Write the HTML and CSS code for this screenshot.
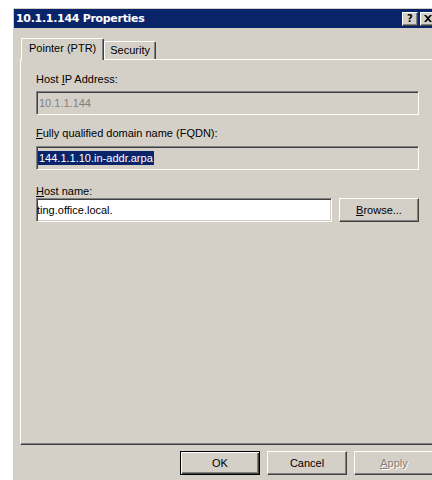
FILE: index.html
```html
<!DOCTYPE html>
<html>
<head>
<meta charset="utf-8">
<title>10.1.1.144 Properties</title>
<link rel="stylesheet" href="styles.css">
</head>
<body>
<div class="window">
  <div class="titlebar">
    <span class="title">10.1.1.144 Properties</span>
    <div class="caption-btns">
      <span class="cbtn help">?</span>
      <span class="cbtn close">
        <svg width="8" height="7" viewBox="0 0 8 7"><path d="M0 0h2l2 2 2-2h2L5 3.5 8 7H6L4 5 2 7H0l3-3.5z" fill="#000"/></svg>
      </span>
    </div>
  </div>
  <div class="content">
    <div class="tabs">
      <div class="tab active">Pointer (PTR)</div>
      <div class="tab">Security</div>
    </div>
    <div class="panel">
      <div class="lbl lbl-ip">Host <u>I</u>P Address:</div>
      <div class="field disabled"><span class="val">10.1.1.144</span></div>

      <div class="lbl lbl-fqdn"><u>F</u>ully qualified domain name (FQDN):</div>
      <div class="field readonly"><span class="val sel">144.1.1.10.in-addr.arpa</span></div>

      <div class="lbl lbl-host"><u>H</u>ost name:</div>
      <div class="row">
        <div class="field edit"><span class="val">ting.office.local.</span></div>
        <button class="btn browse"><u>B</u>rowse...</button>
      </div>
    </div>
    <div class="actions">
      <button class="btn default">OK</button>
      <button class="btn">Cancel</button>
      <button class="btn disabled"><u>A</u>pply</button>
    </div>
  </div>
</div>
</body>
</html>
```

FILE: styles.css
```css
* { box-sizing: border-box; }

html, body {
  margin: 0;
  padding: 0;
}

body {
  width: 432px;
  height: 480px;
  overflow: hidden;
  background: #ffffff;
  font-family: "Liberation Sans", Arial, sans-serif;
  font-size: 11px;
  color: #000;
}

/* dialog frame */
.window {
  margin: 8px 0 0 13px;
  width: 429px;
  height: 490px;
  background: #d4d0c8;
  border-top: 1px solid #d4d0c8;
  border-left: 1px solid #d4d0c8;
}

.titlebar {
  height: 19px;
  background: #0a246a;
  display: flex;
  align-items: center;
  padding: 0 6px 0 2px;
}

.title {
  color: #fff;
  font-family: "DejaVu Sans", sans-serif;
  font-weight: bold;
  font-size: 11px;
  letter-spacing: -0.3px;
  line-height: 13px;
}

.caption-btns {
  margin-left: auto;
  display: flex;
  gap: 2px;
}

.cbtn {
  width: 16px;
  height: 14px;
  background: #d4d0c8;
  border-top: 1px solid #fff;
  border-left: 1px solid #fff;
  border-right: 1px solid #404040;
  border-bottom: 1px solid #404040;
  box-shadow: inset -1px -1px #808080;
  display: flex;
  align-items: center;
  justify-content: center;
}

.cbtn.help {
  font-family: "DejaVu Sans", sans-serif;
  font-weight: bold;
  font-size: 10px;
  line-height: 12px;
}

.content {
  padding: 10px 6px 0 6px;
}

/* property sheet tabs */
.tabs {
  display: flex;
  align-items: flex-end;
  height: 22px;
  margin: 0 0 -1px 1px;
  position: relative;
  z-index: 1;
}

.tab {
  height: 18px;
  margin-bottom: 1px;
  padding: 0 5px 0 5px;
  background: #d4d0c8;
  border-top: 1px solid #fff;
  border-left: 1px solid #fff;
  border-right: 1px solid #404040;
  border-top-left-radius: 2px;
  border-top-right-radius: 2px;
  box-shadow: inset -1px 0 #808080;
  display: flex;
  align-items: center;
  line-height: 13px;
}

.tab.active {
  height: 22px;
  margin-bottom: 0;
  padding: 0 7px 2px 7px;
}

.panel {
  height: 386px;
  background: #d4d0c8;
  border-top: 1px solid #fff;
  border-left: 1px solid #fff;
  border-right: 1px solid #404040;
  border-bottom: 1px solid #404040;
  box-shadow: inset -1px -1px #808080;
  padding: 13px 16px 0 15px;
}

.lbl {
  line-height: 13px;
}

.lbl-ip { margin: 0 0 5px; }
.lbl-fqdn { margin: 12px 0 6px; }
.lbl-host { margin: 15px 0 0; }

/* sunken edit boxes */
.field {
  height: 24px;
  border-top: 1px solid #808080;
  border-left: 1px solid #808080;
  border-right: 1px solid #fff;
  border-bottom: 1px solid #fff;
  box-shadow: inset 1px 1px #404040, inset -1px -1px #d4d0c8;
  padding: 0 1px;
  display: flex;
  align-items: center;
  white-space: nowrap;
  overflow: hidden;
}

.field.disabled { color: #808080; }

.val {
  line-height: 14px;
  padding-left: 1px;
}

.val.sel {
  background: #0a246a;
  color: #fff;
  padding-right: 1px;
}

.field.edit {
  flex: 1;
  background: #fff;
  padding-left: 0;
}

.field.edit .val { padding-left: 0; }

.row {
  display: flex;
  gap: 7px;
}

/* push buttons */
.btn {
  width: 80px;
  height: 24px;
  padding: 0;
  margin: 0;
  font-family: "Liberation Sans", Arial, sans-serif;
  font-size: 11px;
  color: #000;
  background: #d4d0c8;
  border-top: 1px solid #fff;
  border-left: 1px solid #fff;
  border-right: 1px solid #404040;
  border-bottom: 1px solid #404040;
  border-radius: 0;
  box-shadow: inset -1px -1px #808080;
}

.btn.default {
  border: 1px solid #000;
  box-shadow: inset 1px 1px #fff, inset -1px -1px #404040, inset -2px -2px #808080;
}

.btn.disabled {
  color: #808080;
  text-shadow: 1px 1px #fff;
}

.actions {
  display: flex;
  justify-content: flex-end;
  gap: 7px;
  margin-top: 6px;
  padding-right: 2px;
}
```
